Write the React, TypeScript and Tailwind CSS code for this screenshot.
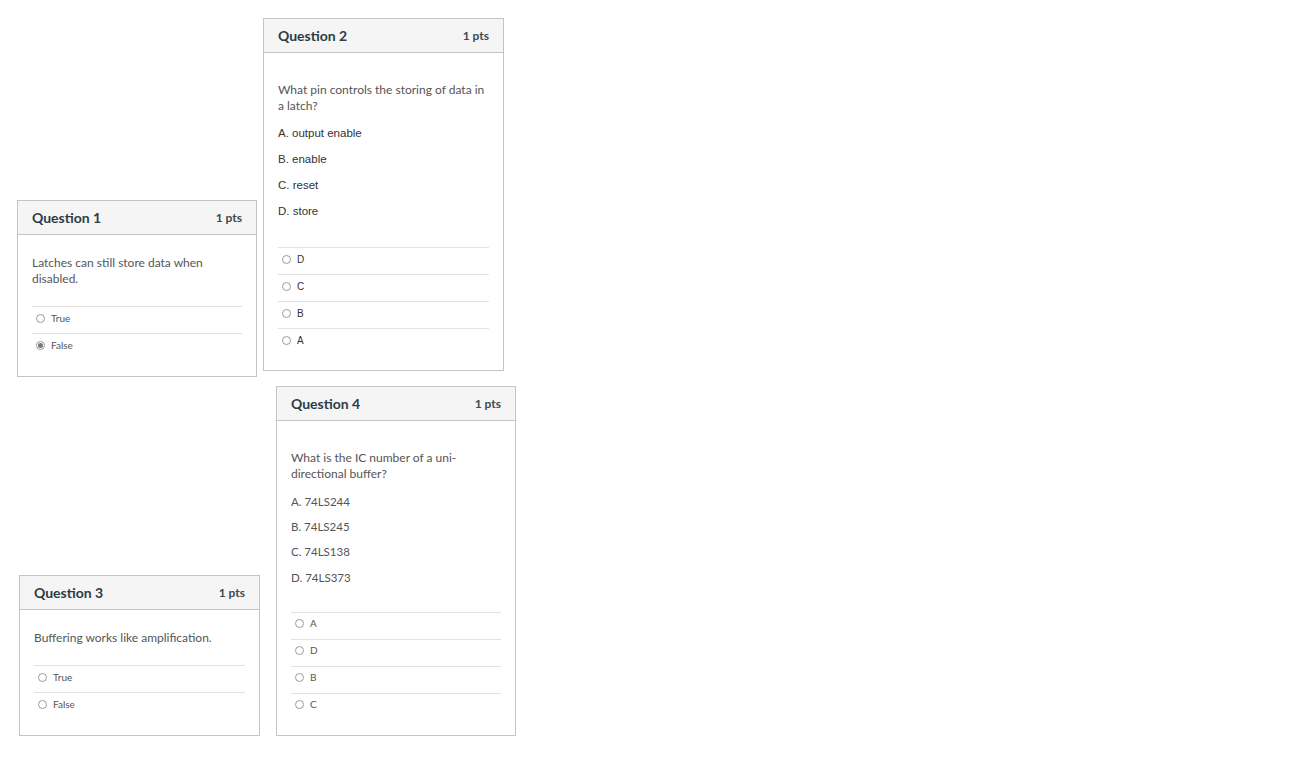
import React from "react";

/* ── Types ── */

type Question = {
  title: string;
  text: string;
  choices?: string[];
  answers: string[];
  selected?: string;
  sans?: boolean; // choices drawn in Arial-like font
  tall?: boolean; // extra top gap in the body
  choiceH?: string;
  width: string;
  margin: string;
};

/* ── Data ── */

const q1: Question = {
  title: "Question 1",
  text: "Latches can still store data when disabled.",
  answers: ["True", "False"],
  selected: "False",
  width: "w-[240px]",
  margin: "mt-[200px]",
};

const q3: Question = {
  title: "Question 3",
  text: "Buffering works like amplification.",
  answers: ["True", "False"],
  width: "w-[241px]",
  margin: "mt-[198px] ml-[2px]",
};

const q2: Question = {
  title: "Question 2",
  text: "What pin controls the storing of data in a latch?",
  choices: ["A. output enable", "B. enable", "C. reset", "D. store"],
  answers: ["D", "C", "B", "A"],
  sans: true,
  tall: true,
  choiceH: "h-[26px]",
  width: "w-[241px]",
  margin: "mt-[18px]",
};

const q4: Question = {
  title: "Question 4",
  text: "What is the IC number of a uni-directional buffer?",
  choices: ["A. 74LS244", "B. 74LS245", "C. 74LS138", "D. 74LS373"],
  answers: ["A", "D", "B", "C"],
  tall: true,
  choiceH: "h-[25.2px]",
  width: "w-[240px]",
  margin: "mt-[15px] ml-[13px]",
};

/* ── Radio ── */

function Radio({ checked }: { checked?: boolean }) {
  return (
    <span className="flex h-[9px] w-[9px] items-center justify-center rounded-full border border-[#9a9a9a] bg-white">
      {checked && <span className="h-[5px] w-[5px] rounded-full bg-[#777]" />}
    </span>
  );
}

/* ── Card ── */

function QuestionCard({ q }: { q: Question }) {
  const choiceFont = q.sans
    ? "font-['Liberation_Sans',Arial,sans-serif] text-[#333]"
    : "text-[#555]";
  return (
    <div
      className={`${q.width} ${q.margin} border border-[#c4c4c4] bg-white font-['Lato',sans-serif]`}
    >
      <div className="flex h-[34px] items-center justify-between border-b border-[#c4c4c4] bg-[#f5f5f5] px-[14px]">
        <span className="text-[14px] font-bold text-[#2d3b45]">{q.title}</span>
        <span className="text-[12px] font-bold text-[#3d4a52]">1 pts</span>
      </div>

      <div
        className={`px-[14px] ${q.tall ? "pt-[29px] pb-[15px]" : "pt-[20px] pb-[16px]"}`}
      >
        <p className="text-[12px] leading-[16px] text-[#555]">{q.text}</p>

        {q.choices && (
          <div className="mt-[7px]">
            {q.choices.map((c) => (
              <div
                key={c}
                className={`flex ${q.choiceH} items-center text-[11.5px] ${choiceFont}`}
              >
                {c}
              </div>
            ))}
          </div>
        )}

        <div className={q.choices ? "mt-[22px]" : "mt-[19px]"}>
          {q.answers.map((a) => (
            <div
              key={a}
              className="flex h-[27px] items-center gap-[6px] border-t border-[#e2e2e2] pb-[4px] pl-[4px]"
            >
              <Radio checked={q.selected === a} />
              <span className={`text-[10px] ${q.sans ? choiceFont : "text-[#555]"}`}>
                {a}
              </span>
            </div>
          ))}
        </div>
      </div>
    </div>
  );
}

/* ── App ── */

export default function App() {
  return (
    <div className="flex min-h-[759px] w-[1301px] items-start bg-white">
      {/* Left column */}
      <div className="flex flex-col items-start pl-[17px]">
        <QuestionCard q={q1} />
        <QuestionCard q={q3} />
      </div>

      {/* Right column */}
      <div className="ml-[3px] flex flex-col items-start">
        <QuestionCard q={q2} />
        <QuestionCard q={q4} />
      </div>
    </div>
  );
}
